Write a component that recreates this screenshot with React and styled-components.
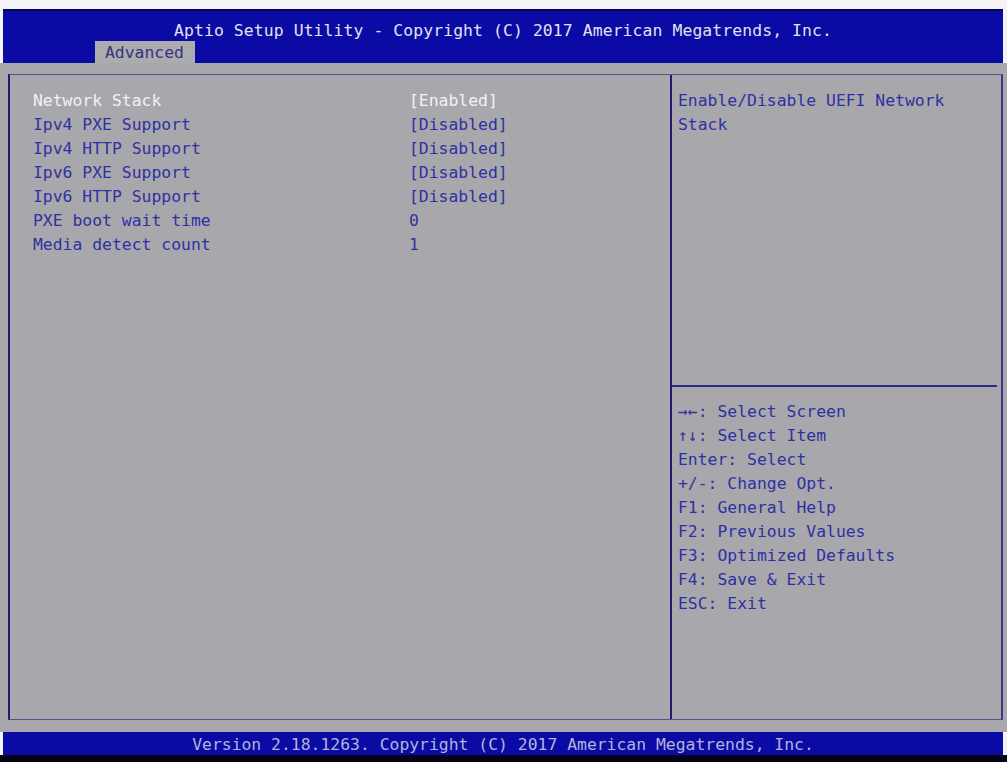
import React from "react";
import styled, { createGlobalStyle } from "styled-components";

const GlobalStyle = createGlobalStyle`
  html, body {
    margin: 0;
    padding: 0;
    background: #f4f4f6;
  }
  body {
    font-family: "DejaVu Sans Mono", "Liberation Mono", monospace;
  }
`;

const settings = [
  { name: "Network Stack", value: "[Enabled]", active: true },
  { name: "Ipv4 PXE Support", value: "[Disabled]" },
  { name: "Ipv4 HTTP Support", value: "[Disabled]" },
  { name: "Ipv6 PXE Support", value: "[Disabled]" },
  { name: "Ipv6 HTTP Support", value: "[Disabled]" },
  { name: "PXE boot wait time", value: "0" },
  { name: "Media detect count", value: "1" },
];

const keys = [
  "→←: Select Screen",
  "↑↓: Select Item",
  "Enter: Select",
  "+/-: Change Opt.",
  "F1: General Help",
  "F2: Previous Values",
  "F3: Optimized Defaults",
  "F4: Save & Exit",
  "ESC: Exit",
];

function App() {
  return (
    <>
      <GlobalStyle />
      <Screen>
        <Header>
          <Title>Aptio Setup Utility - Copyright (C) 2017 American Megatrends, Inc.</Title>
          <Tabs>
            <Tab>Advanced</Tab>
          </Tabs>
        </Header>
        <Body>
          <Frame>
            <MainPanel>
              {settings.map((s) => (
                <Row key={s.name} $active={s.active}>
                  <Name>{s.name}</Name>
                  <Value>{s.value}</Value>
                </Row>
              ))}
            </MainPanel>
            <SidePanel>
              <HelpText>
                Enable/Disable UEFI Network
                <br />
                Stack
              </HelpText>
              <KeyList>
                {keys.map((k) => (
                  <KeyLine key={k}>{k}</KeyLine>
                ))}
              </KeyList>
            </SidePanel>
          </Frame>
        </Body>
        <Footer>Version 2.18.1263. Copyright (C) 2017 American Megatrends, Inc.</Footer>
        <BottomEdge />
      </Screen>
    </>
  );
}

export default App;

const Screen = styled.div`
  width: 1007px;
  height: 762px;
  display: flex;
  flex-direction: column;
  padding-top: 9px;
  box-sizing: border-box;
  overflow: hidden;
  font-size: 16.4px;
`;

const Header = styled.div`
  height: 54px;
  margin: 0 4px 0 3px;
  background: #0a0aa4;
  border-top: 2px solid #06064a;
  box-sizing: border-box;
  display: flex;
  flex-direction: column;
  justify-content: space-between;
`;

const Title = styled.div`
  color: #e2e2f0;
  text-align: center;
  line-height: 20px;
  padding-top: 10px;
  letter-spacing: 0.1px;
`;

const Tabs = styled.div`
  display: flex;
  padding-left: 92px;
`;

const Tab = styled.div`
  background: #acacb0;
  color: #34347a;
  height: 23px;
  line-height: 24px;
  padding: 0 10px;
  width: 80px;
`;

const Body = styled.div`
  flex: 1;
  background: #a8a8ac;
  padding: 11px 4px 12px 8px;
  display: flex;
`;

const Frame = styled.div`
  flex: 1;
  display: flex;
  border-left: 2px solid #1e1e6a;
  border-top: 1px solid #52529a;
  border-bottom: 1px solid #52529a;
  border-right: 2px solid #3a3a84;
`;

const MainPanel = styled.div`
  width: 662px;
  border-right: 2px solid #1e1e6a;
  padding: 14px 0 0 23px;
  box-sizing: border-box;
`;

const Row = styled.div`
  display: flex;
  height: 24px;
  line-height: 24px;
  color: ${(p) => (p.$active ? "#f2f2f6" : "#3030a2")};
`;

const Name = styled.div`
  width: 376px;
  white-space: pre;
`;

const Value = styled.div`
  white-space: pre;
`;

const SidePanel = styled.div`
  flex: 1;
  display: flex;
  flex-direction: column;
`;

const HelpText = styled.div`
  height: 296px;
  padding: 14px 0 0 6px;
  line-height: 24px;
  color: #3030a2;
  border-bottom: 2px solid #2a2a88;
  margin-right: 4px;
`;

const KeyList = styled.div`
  padding: 13px 0 0 6px;
`;

const KeyLine = styled.div`
  height: 24px;
  line-height: 24px;
  color: #3030a2;
  white-space: pre;
`;

const Footer = styled.div`
  height: 23px;
  margin: 0 4px 0 3px;
  background: #0a0aa4;
  color: #b4b4da;
  text-align: center;
  line-height: 26px;
  font-size: 16.4px;
`;

const BottomEdge = styled.div`
  height: 7px;
  background: #040418;
`;
